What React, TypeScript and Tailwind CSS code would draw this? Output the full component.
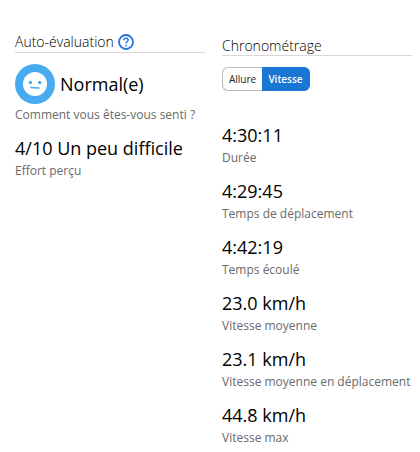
import { useState } from "react";

type Metric = { value: string; label: string };

const metrics: Metric[] = [
  { value: "4:30:11", label: "Durée" },
  { value: "4:29:45", label: "Temps de déplacement" },
  { value: "4:42:19", label: "Temps écoulé" },
  { value: "23.0 km/h", label: "Vitesse moyenne" },
  { value: "23.1 km/h", label: "Vitesse moyenne en déplacement" },
  { value: "44.8 km/h", label: "Vitesse max" },
];

function MetricItem({ value, label }: Metric) {
  return (
    <div className="flex flex-col-reverse">
      <dt className="text-xs leading-[22px] whitespace-nowrap text-[#6a6a6a]">{label}</dt>
      <dd className="text-lg leading-6 whitespace-nowrap">{value}</dd>
    </div>
  );
}

function NeutralFace() {
  return (
    <svg className="size-10 shrink-0" viewBox="0 0 40 40" aria-hidden="true">
      <circle cx="20" cy="20" r="20" fill="#48abf0" />
      <circle cx="20" cy="20" r="12" fill="#fff" />
      <circle cx="15.3" cy="18.5" r="1.7" fill="#48abf0" />
      <circle cx="24.7" cy="18.5" r="1.7" fill="#48abf0" />
      <path d="M15.8 23.4 L24 24" stroke="#48abf0" strokeWidth="1.5" strokeLinecap="round" />
    </svg>
  );
}

function HelpIcon() {
  return (
    <svg className="size-4" viewBox="0 0 16 16" fill="none" stroke="#2472dc" aria-hidden="true">
      <circle cx="8" cy="8" r="7" strokeWidth="1.8" />
      <path d="M5.8 6.3 C5.9 4.9 6.8 4.2 8 4.2 C9.3 4.2 10.2 5 10.2 6.1 C10.2 7.5 8 7.7 8 9.4" strokeWidth="1.4" />
      <circle cx="8" cy="11.6" r="0.9" fill="#2472dc" stroke="none" />
    </svg>
  );
}

export default function App() {
  const [mode, setMode] = useState("Vitesse");
  return (
    <main className="grid grid-cols-2 gap-[17px] bg-white pt-8 pr-2 pb-1 pl-[15px] font-['Open_Sans','Noto_Sans',sans-serif] text-black">
      <section>
        <div className="flex h-[21px] items-center gap-1 border-b border-[#d8d8d8] whitespace-nowrap">
          <h2 className="text-sm leading-5 font-light">Auto-évaluation</h2>
          <button type="button" aria-label="Aide">
            <HelpIcon />
          </button>
        </div>
        <dl className="mt-[11px]">
          <div className="flex flex-col-reverse">
            <dt className="text-xs leading-[22px] whitespace-nowrap text-[#6a6a6a]">Comment vous êtes-vous senti ?</dt>
            <dd className="flex items-center gap-[5px] text-lg leading-6">
              <NeutralFace />
              Normal(e)
            </dd>
          </div>
          <div className="mt-2.5">
            <MetricItem value="4/10 Un peu difficile" label="Effort perçu" />
          </div>
        </dl>
      </section>
      <section className="pt-1">
        <h2 className="h-5 border-b border-[#d8d8d8] text-sm leading-5 font-light">Chronométrage</h2>
        <div className="mt-[11px] flex h-6 w-22 text-[10px]">
          {["Allure", "Vitesse"].map((name) => (
            <button
              key={name}
              type="button"
              aria-pressed={mode === name}
              onClick={() => setMode(name)}
              className={`border first:w-10 first:rounded-l-md first:border-r-0 last:grow last:rounded-r-md last:border-l-0 ${
                mode === name
                  ? "border-[#1976d2] bg-[#1976d2] font-semibold text-white"
                  : "border-[#b8b8b8] text-[#222222]"
              }`}
            >
              {name}
            </button>
          ))}
        </div>
        <dl className="mt-8 flex flex-col gap-2.5">
          {metrics.map((metric) => (
            <MetricItem key={metric.label} {...metric} />
          ))}
        </dl>
      </section>
    </main>
  );
}
